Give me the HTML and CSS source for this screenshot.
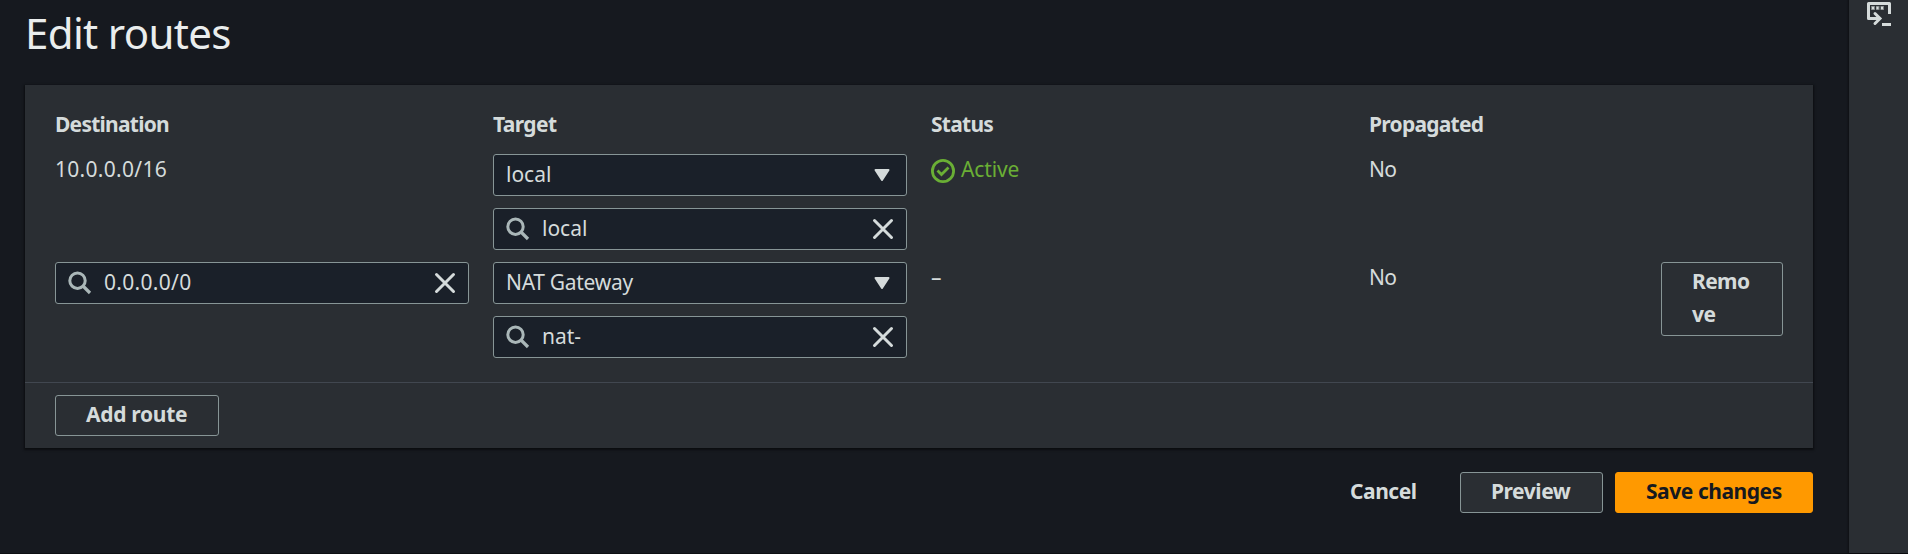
FILE: index.html
```html
<!DOCTYPE html>
<html lang="en">
<head>
<meta charset="utf-8">
<title>Edit routes</title>
<link rel="stylesheet" href="styles.css">
</head>
<body>
<svg class="defs" aria-hidden="true">
  <symbol id="search" viewBox="0 0 24 24"><circle cx="9.500" cy="9.700" r="7.700" fill="none" stroke="currentColor" stroke-width="3"/><path d="M15 15l7 7" fill="none" stroke="currentColor" stroke-width="3.200"/></symbol>
  <symbol id="close" viewBox="0 0 24 24"><path d="M3.500 3.500l17 17M20.500 3.500l-17 17" fill="none" stroke="currentColor" stroke-width="3" stroke-linecap="round"/></symbol>
  <symbol id="caret" viewBox="0 0 24 24"><path d="M4.500 7h13l-6.500 10z" fill="currentColor" stroke="currentColor" stroke-width="2" stroke-linejoin="round"/></symbol>
</svg>
<div class="app">
  <main class="page">
    <h1 class="title"><span class="t-title">Edit routes</span></h1>
    <section class="panel">
      <div class="routes">
        <div class="head"><span class="t-dest">Destination</span></div>
        <div class="head"><span class="t-target">Target</span></div>
        <div class="head"><span class="t-dest">Status</span></div>
        <div class="head"><span class="t-dest">Propagated</span></div>
        <div class="head"></div>

        <div class="cell"><span class="t-num">10.0.0.0/16</span></div>
        <div class="fields">
          <div class="field"><span class="value">local</span><svg class="icon"><use href="#caret"/></svg></div>
          <div class="field"><svg class="icon search"><use href="#search"/></svg><span class="value">local</span><svg class="icon"><use href="#close"/></svg></div>
        </div>
        <div class="cell active">
          <svg class="icon" viewBox="0 0 24 24"><circle cx="12" cy="12" r="10.600" fill="none" stroke="currentColor" stroke-width="2.800"/><path d="M6.500 11.500l4 4 7-7" fill="none" stroke="currentColor" stroke-width="2.800"/></svg><span class="t-text">Active</span>
        </div>
        <div class="cell"><span class="t-no">No</span></div>
        <div class="cell"></div>

        <div class="fields">
          <div class="field"><svg class="icon search"><use href="#search"/></svg><span class="value t-num">0.0.0.0/0</span><svg class="icon"><use href="#close"/></svg></div>
        </div>
        <div class="fields">
          <div class="field"><span class="value t-nat">NAT Gateway</span><svg class="icon"><use href="#caret"/></svg></div>
          <div class="field"><svg class="icon search"><use href="#search"/></svg><span class="value">nat-</span><svg class="icon"><use href="#close"/></svg></div>
        </div>
        <div class="cell"><span>–</span></div>
        <div class="cell"><span class="t-no">No</span></div>
        <div class="button remove"><span class="t-remove">Remo<br>ve</span></div>
      </div>
      <div class="footer"><div class="button add"><span class="t-nat">Add route</span></div></div>
    </section>
    <div class="actions">
      <div class="link"><span class="t-action">Cancel</span></div>
      <div class="button preview"><span class="t-action">Preview</span></div>
      <div class="button save"><span class="t-action">Save changes</span></div>
    </div>
  </main>
  <aside class="rail">
    <svg class="icon" viewBox="0 0 24 24"><path d="M22.500 12V1.500H1.500V16.500H12" fill="none" stroke="currentColor" stroke-width="3" stroke-linejoin="round"/><path d="M8 11.500l5 5-5 5" fill="none" stroke="currentColor" stroke-width="3" stroke-linecap="round"/><path d="M15 22.500h9" stroke="currentColor" stroke-width="3"/><path d="M4 6h13" stroke="#7d8384" stroke-width="4"/><path d="M5 6h2M9.500 6h2M14 6h2" stroke="currentColor" stroke-width="2.400"/><path d="M8.500 4v4M13 4v4" stroke="#2a2e33" stroke-width="1"/></svg>
  </aside>
</div>
</body>
</html>
```
FILE: styles.css
```css
* { box-sizing: border-box; }
body {
  margin: 0;
  background: #16191f;
  color: #d5dbdb;
  font: 21px/33px "Noto Sans", "Open Sans", sans-serif;
  overflow: hidden;
}
.defs { display: none; }
.app { display: flex; height: 554px; border-bottom: 1px solid #0d0f12; }
.page { flex: 1; min-width: 0; padding: 0 36px 0 25px; }
.title { margin: 0; height: 85px; padding-top: 6px; font-size: 42px; line-height: 54px; font-weight: 400; color: #eaeded; }
.panel { height: 363px; background: #2a2e33; box-shadow: 0 1px 2px 1px rgba(0, 0, 0, .5); }
.routes {
  display: grid;
  grid-template-columns: repeat(3, 414px) 268px 122px;
  grid-template-rows: 33px 96px 96px;
  column-gap: 24px;
  row-gap: 12px;
  height: 297px;
  padding: 24px 30px 0;
}
.head { height: 33px; line-height: 31px; font-weight: 700; }
.cell { height: 33px; line-height: 31px; }
.active { display: flex; align-items: flex-start; gap: 6px; color: #6aaf35; }
.active .icon { margin-top: 5px; }
.fields { display: flex; flex-direction: column; gap: 12px; }
.field {
  display: flex;
  align-items: center;
  gap: 12px;
  height: 42px;
  padding: 0 11px 0 12px;
  border: 1px solid #879596;
  border-radius: 3px;
  background: #1a2029;
}
.value { flex: 1; padding-bottom: 1px; }
.icon { display: block; width: 24px; height: 24px; flex: none; }
.search { color: #aab7b8; }
.button {
  height: 41px;
  padding: 2px 30px;
  border: 1px solid #879596;
  border-radius: 3px;
  background: #2a2e33;
  font-weight: 700;
}
.routes .remove { height: 74px; }
.footer { height: 66px; padding: 12px 30px; border-top: 1px solid #414750; }
.add { width: 164px; }
.actions { display: flex; justify-content: flex-end; gap: 12px; margin-top: 24px; font-weight: 700; }
.link { width: 98px; height: 41px; padding: 3px 0; }
.preview { width: 143px; }
.save { width: 198px; border-color: #f90; background: #f90; color: #16191f; }
.rail { width: 59px; flex: none; padding: 2px 0 0 18px; background: #2a2e33; box-shadow: 0 0 2px 1px rgba(0, 0, 0, .4); }
span { white-space: nowrap; }
.t-title { letter-spacing: -.65px; }
.t-dest { letter-spacing: -.75px; }
.t-target { letter-spacing: -.62px; }
.t-num { letter-spacing: .3px; }
.t-text { letter-spacing: -.15px; }
.t-nat { letter-spacing: -.3px; }
.t-no { letter-spacing: -.8px; }
.t-action { letter-spacing: -.45px; }
.t-remove { letter-spacing: -.6px; }
```
